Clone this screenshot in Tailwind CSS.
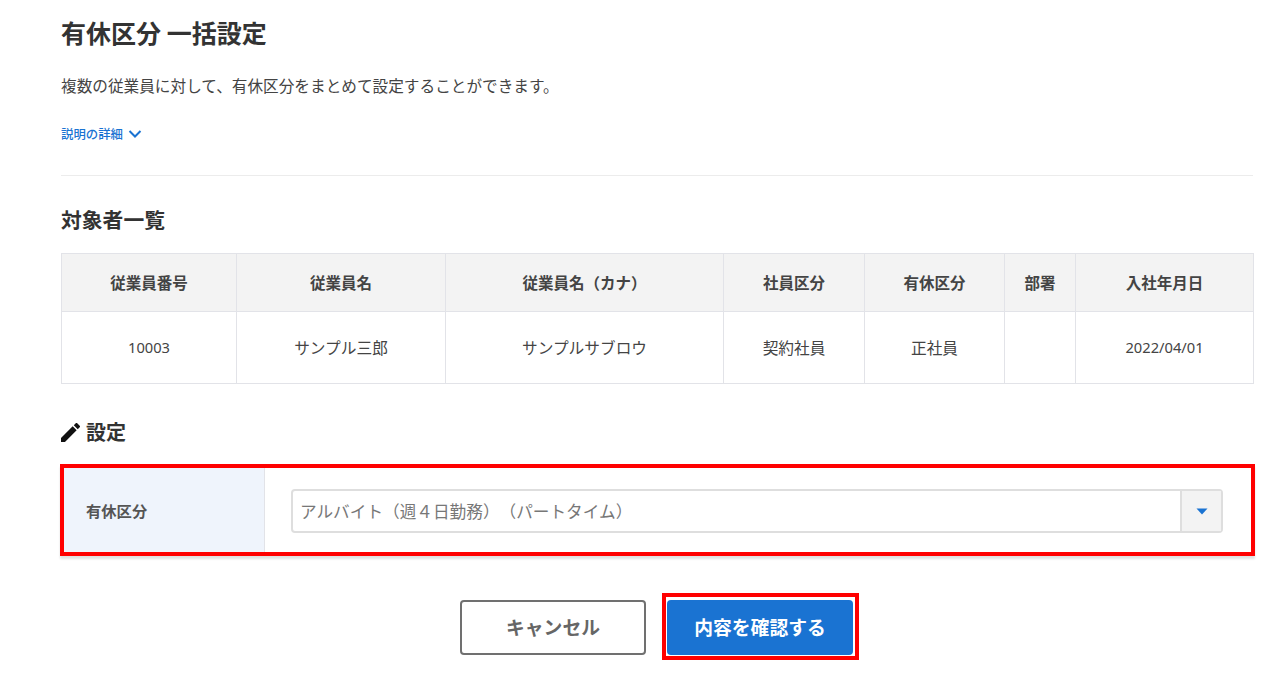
<!DOCTYPE html>
<html lang="ja">
<head>
    <meta charset="UTF-8">
    <title>有休区分 一括設定</title>
    <script src="https://cdn.jsdelivr.net/npm/@tailwindcss/browser@4"></script>
</head>
<body class="bg-white text-[#333] font-['Noto_Sans_CJK_JP','Noto_Sans',sans-serif] overflow-hidden [text-spacing-trim:space-all]">
    <main class="w-[1280px] h-[680px] overflow-hidden pl-[61px] pr-[27px]">
        <!-- Header -->
        <h1 class="pt-[14px] h-[52px] text-[25px] leading-[36px] font-bold">有休区分 一括設定</h1>
        <p class="mt-[21px] h-[26px] text-[15.65px] leading-[26px] text-[#444]">複数の従業員に対して、有休区分をまとめて設定することができます。</p>
        <a class="mt-[25px] flex items-center gap-[5px] h-[20px] text-[12.4px] leading-[20px] font-medium text-[#1a73d2]">
            説明の詳細
            <svg class="w-[14px] h-[10px]" viewBox="0 0 14 10" fill="none" stroke="#1a73d2" stroke-width="2"><path d="M1.5 2 L7 7.5 L12.5 2"/></svg>
        </a>
        <hr class="mt-[31px] border-t border-[#ececec]">

        <!-- 対象者一覧 -->
        <h2 class="mt-[28px] h-[30px] text-[20.8px] leading-[30px] font-bold">対象者一覧</h2>
        <table class="mt-[19px] w-[1192px] table-fixed border-collapse text-center text-[#444]">
            <colgroup>
                <col class="w-[175px]"><col class="w-[209px]"><col class="w-[278px]"><col class="w-[141px]"><col class="w-[140px]"><col class="w-[71px]"><col class="w-[178px]">
            </colgroup>
            <thead>
                <tr class="h-[58px] bg-[#f3f3f3] text-[15.5px] font-bold">
                    <th class="border border-[#e2e3e8]">従業員番号</th>
                    <th class="border border-[#e2e3e8]">従業員名</th>
                    <th class="border border-[#e2e3e8]">従業員名（カナ）</th>
                    <th class="border border-[#e2e3e8]">社員区分</th>
                    <th class="border border-[#e2e3e8]">有休区分</th>
                    <th class="border border-[#e2e3e8]">部署</th>
                    <th class="border border-[#e2e3e8]">入社年月日</th>
                </tr>
            </thead>
            <tbody>
                <tr class="h-[72px] text-[15.7px]">
                    <td class="border border-[#e2e3e8] text-[14.7px] font-['Noto_Sans',sans-serif]">10003</td>
                    <td class="border border-[#e2e3e8]">サンプル三郎</td>
                    <td class="border border-[#e2e3e8]">サンプルサブロウ</td>
                    <td class="border border-[#e2e3e8]">契約社員</td>
                    <td class="border border-[#e2e3e8]">正社員</td>
                    <td class="border border-[#e2e3e8]"></td>
                    <td class="border border-[#e2e3e8] text-[14.7px] font-['Noto_Sans',sans-serif]">2022/04/01</td>
                </tr>
            </tbody>
        </table>

        <!-- 設定 -->
        <h2 class="mt-[33px] flex items-center gap-[6px] h-[30px] text-[20px] leading-[30px] font-bold">
            <svg class="w-[19px] h-[19px]" viewBox="3 3 18 18" fill="#111"><path d="M3 17.25V21h3.75L17.81 9.94l-3.75-3.75L3 17.25zM20.71 7.04a1 1 0 0 0 0-1.41l-2.34-2.34a1 1 0 0 0-1.41 0l-1.83 1.83 3.75 3.75 1.83-1.83z"/></svg>
            設定
        </h2>
        <div class="relative -ml-[1px] mt-[17px] w-[1195px] h-[92px] border-4 border-[#ff0000] flex shadow-[0_3px_2px_rgba(0,0,0,0.12)]">
            <div class="w-[201px] bg-[#eff4fc] border-r border-[#e2e3e8] pl-[22px] flex items-center text-[15.3px] font-bold text-[#555]">有休区分</div>
            <div class="flex-1 pl-[26px] pr-[28px] pt-[2px] flex items-center">
                <div class="flex w-full h-[44px] border-2 border-[#dedede] rounded-[4px]">
                    <div class="flex-1 pl-[7px] text-[16.65px] leading-[40px] text-[#777]">アルバイト（週４日勤務）（パートタイム）</div>
                    <div class="w-[41px] bg-[#f3f3f3] border-l-2 border-[#dedede] flex items-center justify-center">
                        <svg class="w-[12px] h-[7px]" viewBox="0 0 12 7" fill="#1a73d2"><path d="M0.5 0.5 H11.5 L6 6.5 Z"/></svg>
                    </div>
                </div>
            </div>
        </div>

        <!-- Buttons -->
        <div class="mt-[37px] flex items-start gap-[16px] pl-[399px]">
            <button class="mt-[7px] w-[186px] h-[55px] bg-white border-2 border-[#707070] rounded-[4px] text-[18.8px] font-bold text-[#666]">キャンセル</button>
            <div class="border-4 border-[#ff0000] pt-[3px] pb-[1px] pl-[1px] pr-[2px]">
                <button class="block w-[186px] h-[55px] bg-[#1a73d2] rounded-[4px] text-[18.8px] font-bold text-white">内容を確認する</button>
            </div>
        </div>
    </main>
</body>
</html>
